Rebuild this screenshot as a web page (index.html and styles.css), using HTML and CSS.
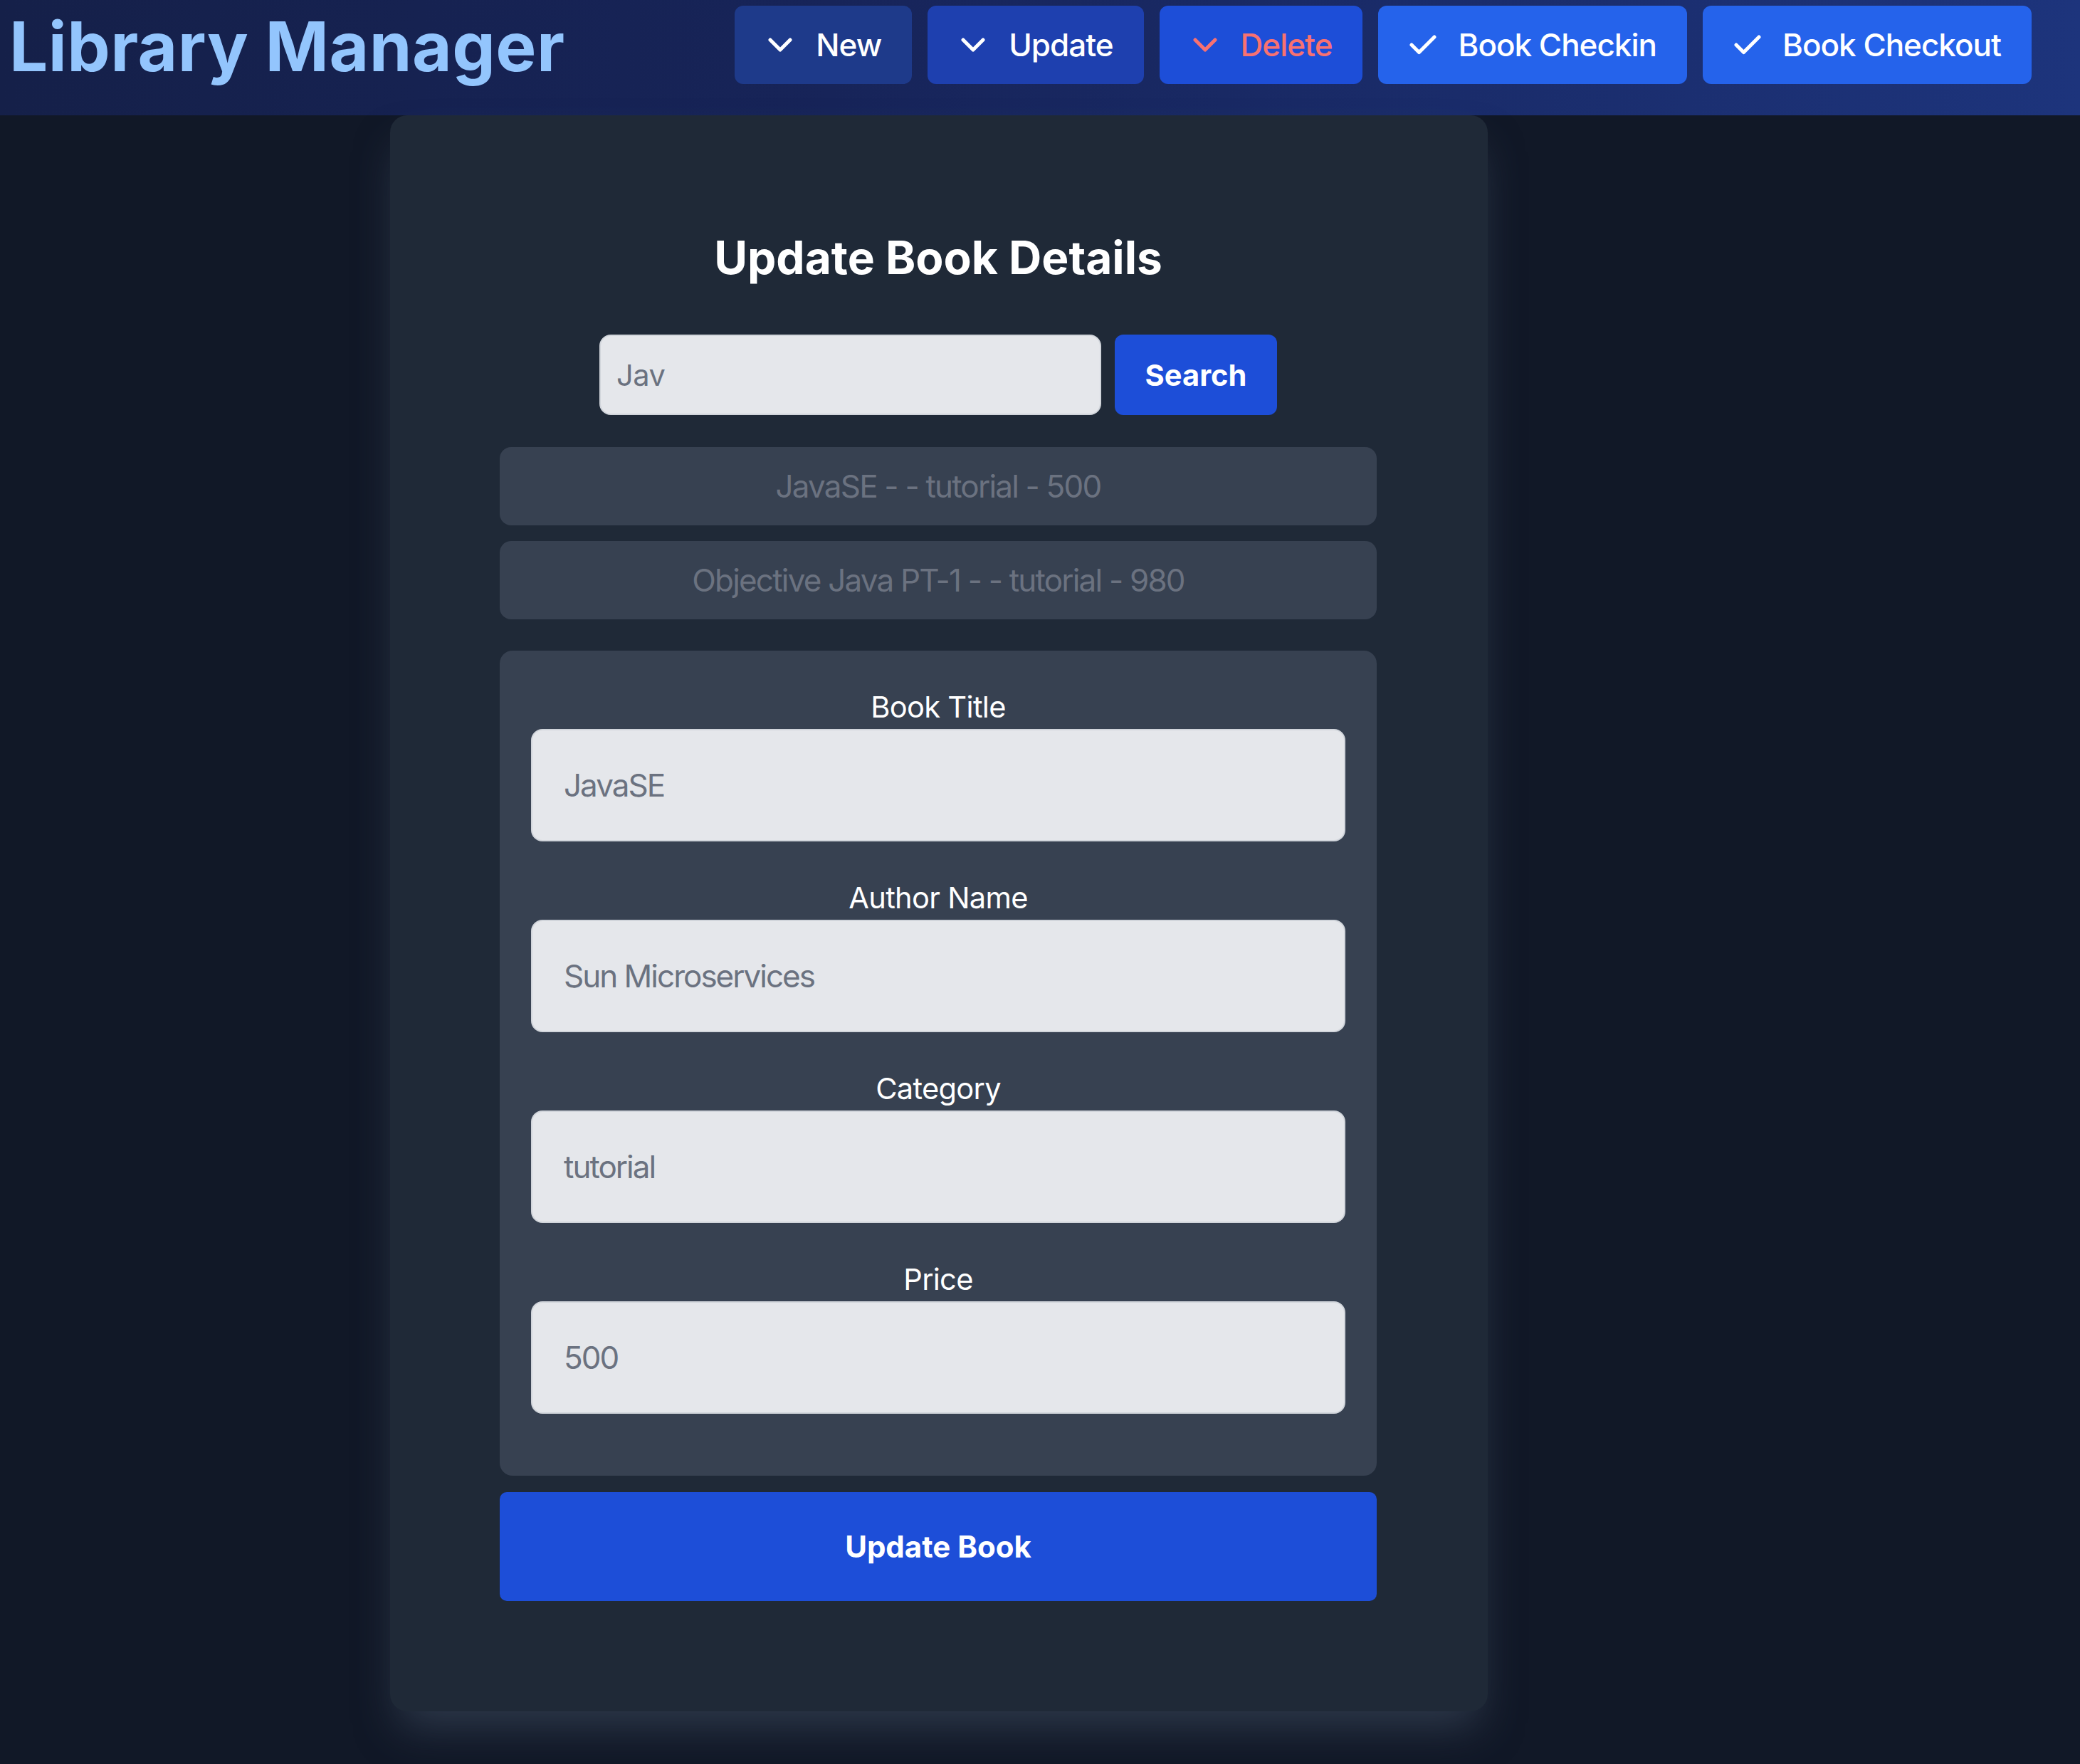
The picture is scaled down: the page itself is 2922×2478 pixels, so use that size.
FILE: index.html
```html
<!DOCTYPE html>
<html lang="en">
<head>
<meta charset="utf-8">
<title>Library Manager</title>
<link rel="stylesheet" href="styles.css">
</head>
<body>
<header class="topbar">
  <h1 class="brand">Library Manager</h1>
  <nav class="actions">
    <button class="nav-btn btn-new"><svg class="chev" viewBox="0 0 34 20"><path d="M3 3 L17 17 L31 3"/></svg><span>New</span></button>
    <button class="nav-btn btn-update"><svg class="chev" viewBox="0 0 34 20"><path d="M3 3 L17 17 L31 3"/></svg><span>Update</span></button>
    <button class="nav-btn btn-delete"><svg class="chev" viewBox="0 0 34 20"><path d="M3 3 L17 17 L31 3"/></svg><span>Delete</span></button>
    <button class="nav-btn btn-check"><svg class="check" viewBox="0 0 38 28"><path d="M3 14 L13.5 24.5 L35 3"/></svg><span>Book Checkin</span></button>
    <button class="nav-btn btn-check"><svg class="check" viewBox="0 0 38 28"><path d="M3 14 L13.5 24.5 L35 3"/></svg><span>Book Checkout</span></button>
  </nav>
</header>
<main class="page">
  <section class="card">
    <h2 class="card-title">Update Book Details</h2>
    <div class="search-row">
      <input class="search-input" type="text" value="Jav">
      <button class="search-btn">Search</button>
    </div>
    <ul class="results">
      <li class="result">JavaSE - - tutorial - 500</li>
      <li class="result">Objective Java PT-1 - - tutorial - 980</li>
    </ul>
    <div class="panel">
      <div class="field">
        <label class="field-label">Book Title</label>
        <input class="field-input" type="text" value="JavaSE">
      </div>
      <div class="field">
        <label class="field-label">Author Name</label>
        <input class="field-input" type="text" value="Sun Microservices">
      </div>
      <div class="field">
        <label class="field-label">Category</label>
        <input class="field-input" type="text" value="tutorial">
      </div>
      <div class="field">
        <label class="field-label">Price</label>
        <input class="field-input" type="text" value="500">
      </div>
    </div>
    <button class="submit">Update Book</button>
  </section>
</main>
</body>
</html>
```
FILE: styles.css
```css
* { box-sizing: border-box; }
html, body {
  margin: 0;
  padding: 0;
  background: #111827;
  font-family: Inter, "Noto Sans", sans-serif;
}
body { min-height: 2478px; overflow: hidden; }

.topbar {
  height: 162px;
  display: flex;
  align-items: flex-start;
  padding-top: 8px;
  background: linear-gradient(to right, #152049 0%, #172459 40%, #1d347c 100%);
}
.brand {
  margin: 9px 0 0 13px;
  font-size: 96px;
  line-height: 96px;
  font-weight: 700;
  letter-spacing: 0.5px;
  color: #93c5fd;
  white-space: nowrap;
}
.actions {
  margin-left: auto;
  margin-right: 68px;
  display: flex;
  gap: 22px;
}
.nav-btn {
  height: 110px;
  display: flex;
  align-items: center;
  padding: 0 43px 0 47px;
  gap: 33px;
  border: none;
  border-radius: 12px;
  font-family: inherit;
  font-size: 44px;
  font-weight: 500;
  letter-spacing: -1px;
  color: #ffffff;
  white-space: nowrap;
}
.nav-btn svg {
  fill: none;
  stroke: currentColor;
  stroke-width: 5;
  stroke-linecap: round;
  stroke-linejoin: round;
  flex: none;
}
.chev { width: 34px; height: 20px; }
.check { width: 38px; height: 28px; }
.btn-new { background: #1e3a8a; }
.btn-update { background: #1e40af; }
.btn-delete { background: #1d4ed8; color: #f87171; }
.btn-check { background: #2563eb; padding-left: 44px; gap: 30px; }

.page { display: block; }
.card {
  margin-left: 548px;
  width: 1542px;
  padding: 161px 156px 155px 154px;
  background: #1f2937;
  border-radius: 24px;
  box-shadow: 0 34px 60px -14px rgba(71, 85, 105, 0.55);
}
.card-title {
  margin: 0;
  text-align: center;
  color: #ffffff;
  font-size: 64px;
  line-height: 77px;
  font-weight: 700;
}
.search-row {
  margin-top: 70px;
  display: flex;
  justify-content: center;
  gap: 19px;
}
.search-input {
  width: 705px;
  height: 113px;
  padding: 0 22px;
  background: #e5e7eb;
  border: 2px solid #d1d5db;
  border-radius: 16px;
  font-family: inherit;
  font-size: 41.6px;
  letter-spacing: -0.5px;
  color: #6b7280;
  outline: none;
}
.search-btn {
  width: 228px;
  height: 113px;
  background: #1d4ed8;
  border: none;
  border-radius: 12px;
  color: #ffffff;
  font-family: inherit;
  font-size: 41.6px;
  font-weight: 700;
}
.results {
  list-style: none;
  margin: 45px 0 0;
  padding: 0;
  display: flex;
  flex-direction: column;
  gap: 22px;
}
.result {
  height: 110px;
  display: flex;
  align-items: center;
  justify-content: center;
  background: #374151;
  border-radius: 16px;
  color: #6b7280;
  font-size: 44px;
  letter-spacing: -1.8px;
}
.panel {
  margin-top: 44px;
  padding: 48px 44px 87px;
  background: #374151;
  border-radius: 18px;
  display: flex;
  flex-direction: column;
  gap: 48px;
}
.field { display: flex; flex-direction: column; }
.field-label {
  text-align: center;
  color: #ffffff;
  font-size: 41.6px;
  line-height: 62px;
  letter-spacing: -0.7px;
}
.field-input {
  width: 100%;
  height: 158px;
  padding: 0 44px;
  background: #e5e7eb;
  border: 2px solid #d1d5db;
  border-radius: 16px;
  font-family: inherit;
  font-size: 44px;
  letter-spacing: -2px;
  color: #6b7280;
  outline: none;
}
.submit {
  margin-top: 23px;
  width: 100%;
  height: 153px;
  background: #1d4ed8;
  border: none;
  border-radius: 10px;
  color: #ffffff;
  font-family: inherit;
  font-size: 42px;
  font-weight: 700;
}
```
